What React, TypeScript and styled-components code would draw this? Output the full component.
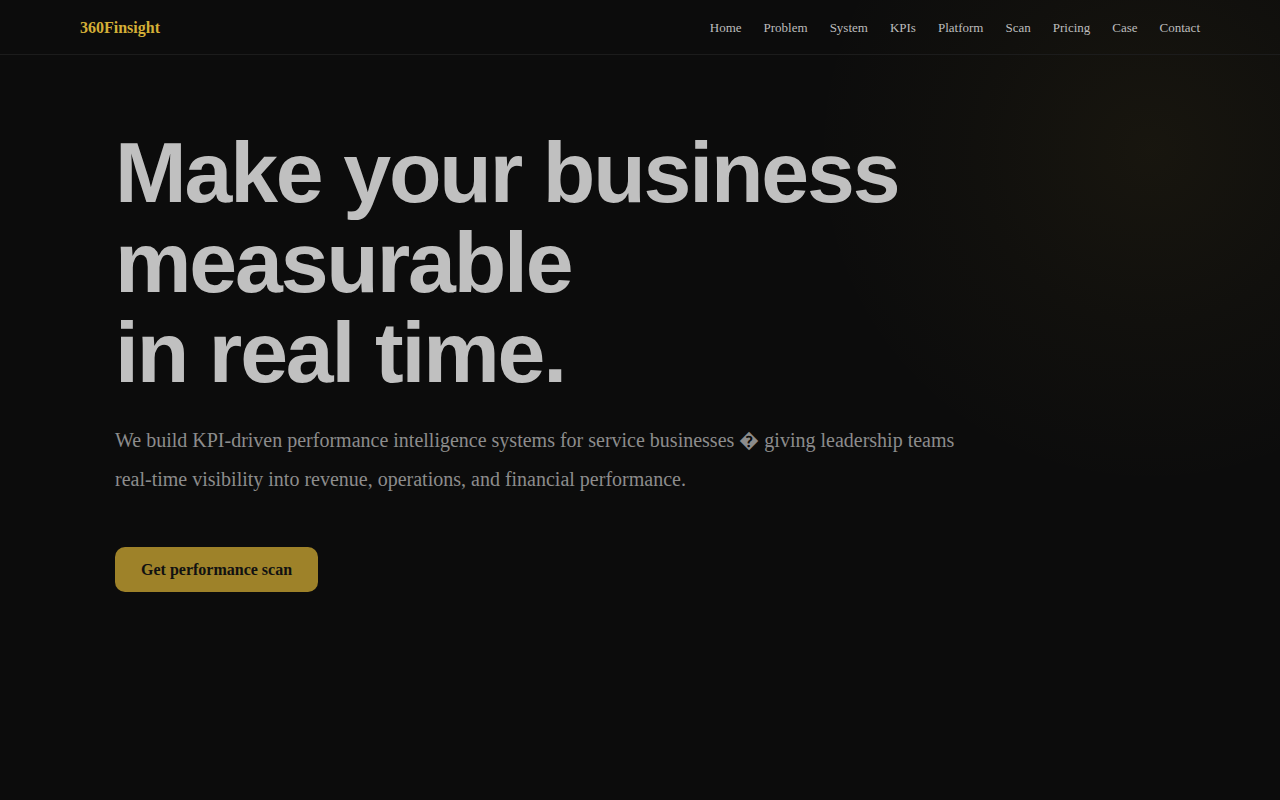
import React from 'react';
import styled, { createGlobalStyle } from 'styled-components';

const GlobalStyle = createGlobalStyle`
    * {
        box-sizing: border-box;
    }
    html, body {
        margin: 0;
        padding: 0;
        background-color: #0c0c0c;
        font-family: "Liberation Serif", "Times New Roman", serif;
    }
`;

const navItems = ['Home', 'Problem', 'System', 'KPIs', 'Platform', 'Scan', 'Pricing', 'Case', 'Contact'];

const App = () => {
    return (
        <Page>
            <GlobalStyle />
            <Header>
                <Logo>360Finsight</Logo>
                <Nav>
                    {navItems.map((item) => (
                        <NavLink key={item} href={`#${item.toLowerCase()}`}>{item}</NavLink>
                    ))}
                </Nav>
            </Header>
            <Hero>
                <HeroInner>
                    <Title>
                        Make your business<br />
                        measurable<br />
                        in real time.
                    </Title>
                    <Lead>
                        We build KPI-driven performance intelligence systems for service businesses {'\uFFFD'} giving leadership teams
                        real-time visibility into revenue, operations, and financial performance.
                    </Lead>
                    <CtaButton>Get performance scan</CtaButton>
                </HeroInner>
            </Hero>
        </Page>
    );
};

export default App;

const Page = styled.div`
    min-height: 800px;
    background-color: #0c0c0c;
    background-image: radial-gradient(circle at 1150px 150px, rgba(212, 175, 55, 0.06) 0px, rgba(212, 175, 55, 0.025) 180px, rgba(212, 175, 55, 0) 340px);
`;

const Header = styled.header`
    height: 55px;
    padding: 1px 80px 0;
    display: flex;
    align-items: center;
    justify-content: space-between;
    border-bottom: 1px solid #1c1c1c;
`;

const Logo = styled.div`
    color: #d4af37;
    font-weight: 700;
    font-size: 16px;
`;

const Nav = styled.nav`
    display: flex;
    gap: 22px;
`;

const NavLink = styled.a`
    color: #bdbdbd;
    font-size: 13px;
    text-decoration: none;
`;

const Hero = styled.section`
    padding: 72px 0 80px;
`;

const HeroInner = styled.div`
    max-width: 1050px;
    margin: 0 auto;
`;

const Title = styled.h1`
    margin: 0;
    font-family: "Liberation Sans", Arial, sans-serif;
    font-weight: 700;
    font-size: 86px;
    line-height: 90px;
    letter-spacing: -0.025em;
    color: #c0c0c0;
`;

const Lead = styled.p`
    margin: 24px 0 0;
    max-width: 860px;
    font-size: 20px;
    line-height: 39px;
    color: #8c8c8c;
`;

const CtaButton = styled.button`
    margin-top: 48px;
    height: 45px;
    padding: 0 26px;
    border: none;
    border-radius: 10px;
    background-color: #9e8229;
    color: #111;
    font-family: "Liberation Serif", "Times New Roman", serif;
    font-weight: 700;
    font-size: 16px;
    cursor: pointer;
`;
